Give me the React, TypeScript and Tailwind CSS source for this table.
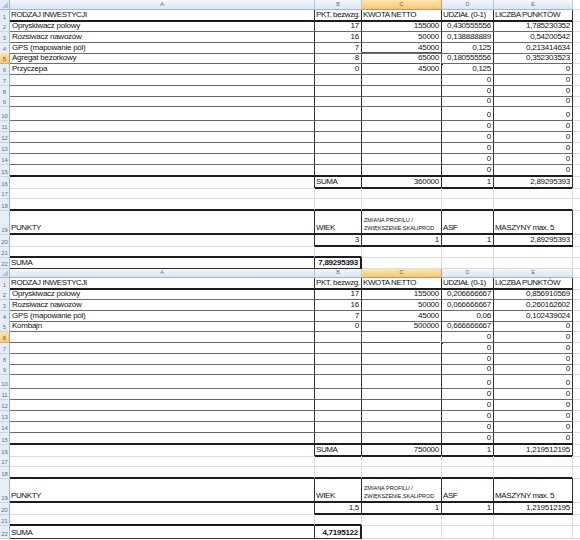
import clsx from 'clsx';

type Bd = 'n' | 'g' | 'm' | 'd' | 'D';
type Cell = { t?: string; r?: boolean; bold?: boolean; small?: boolean; br?: Bd; bb?: Bd; sel?: boolean };
type Row = { h: number; cells: Cell[] };

interface SheetData {
  table: string[][];
  kwota: string;
  suma: string;
  wiek: string;
  total: string;
  sel: number;
}

const COLS = 'grid grid-cols-[10px_305px_47px_80px_52px_79px_7px]';

const H: Record<number, string> = {
  9: 'h-[9px]',
  10: 'h-[10px]',
  11: 'h-[11px]',
  12: 'h-[12px]',
  13: 'h-[13px]',
  14: 'h-[14px]',
  24: 'h-[24px]',
};

const RIGHT: Record<Bd, string> = {
  n: '',
  g: 'border-r border-r-[#dadcdd]',
  m: 'border-r border-r-[#6e6e6e]',
  d: 'border-r border-r-[#2f2f2f]',
  D: 'border-r-2 border-r-[#1c1c1c]',
};

const BOTTOM: Record<Bd, string> = {
  n: '',
  g: 'border-b border-b-[#dadcdd]',
  m: 'border-b border-b-[#6a6a6a]',
  d: 'border-b border-b-[#2f2f2f]',
  D: 'border-b-2 border-b-[#1c1c1c]',
};

const TIGHT = new Set([
  'RODZAJ INWESTYCJI', 'PKT. bezwzg.', 'KWOTA NETTO', 'UDZIAŁ (0-1)', 'LICZBA PUNKTÓW',
  'SUMA', 'PUNKTY', 'WIEK', 'ASF', 'MASZYNY max. 5',
]);

const HEAD = ['RODZAJ INWESTYCJI', 'PKT. bezwzg.', 'KWOTA NETTO', 'UDZIAŁ (0-1)', 'LICZBA PUNKTÓW'];
const EMPTY = ['', '', '', '0', '0'];

const sheets: { d: SheetData; headH: number; lastH: number }[] = [
  {
    headH: 10,
    lastH: 11,
    d: {
      table: [
        HEAD,
        ['Opryskiwacz polowy', '17', '155000', '0,430555556', '1,785230352'],
        ['Rozsiwacz nawozów', '16', '50000', '0,138888889', '0,54200542'],
        ['GPS (mapowanie pól)', '7', '45000', '0,125', '0,213414634'],
        ['Agregat bezorkowy', '8', '65000', '0,180555556', '0,352303523'],
        ['Przyczepa', '0', '45000', '0,125', '0'],
        EMPTY, EMPTY, EMPTY, EMPTY, EMPTY, EMPTY, EMPTY, EMPTY, EMPTY,
      ],
      kwota: '360000',
      suma: '2,89295393',
      wiek: '3',
      total: '7,89295393',
      sel: 5,
    },
  },
  {
    headH: 9,
    lastH: 13,
    d: {
      table: [
        HEAD,
        ['Opryskiwacz polowy', '17', '155000', '0,206666667', '0,856910569'],
        ['Rozsiwacz nawozów', '16', '50000', '0,066666667', '0,260162602'],
        ['GPS (mapowanie pól)', '7', '45000', '0,06', '0,102439024'],
        ['Kombajn', '0', '500000', '0,666666667', '0'],
        EMPTY, EMPTY, EMPTY, EMPTY, EMPTY, EMPTY, EMPTY, EMPTY, EMPTY, EMPTY,
      ],
      kwota: '750000',
      suma: '1,219512195',
      wiek: '1,5',
      total: '4,7195122',
      sel: 6,
    },
  },
];

function buildRows(d: SheetData, lastH: number): Row[] {
  const heights = [11, 11, 11, 10, 11, 11, 11, 10, 11, 14, 11, 11, 11, 11, 12];
  const rows: Row[] = d.table.map((r, i) => ({
    h: heights[i],
    cells: r.map((t, j) => ({
      t,
      r: i > 0 && j > 0,
      br: 'd' as Bd,
      bb: (i === 0 || i === 14 ? 'D' : 'm') as Bd,
      sel: i + 1 === d.sel && j === 2,
    })),
  }));
  rows.push({ h: 11, cells: [
    { br: 'd' },
    { t: 'SUMA', br: 'd', bb: 'D' },
    { t: d.kwota, r: true, br: 'd', bb: 'D' },
    { t: '1', r: true, br: 'd', bb: 'D' },
    { t: d.suma, r: true, br: 'd', bb: 'D' },
  ] });
  rows.push({ h: 11, cells: [{}, {}, {}, {}, {}] });
  rows.push({ h: 12, cells: [{ bb: 'D' }, { bb: 'D' }, { bb: 'D' }, { bb: 'D' }, { bb: 'D' }] });
  rows.push({ h: 24, cells: [
    { t: 'PUNKTY', br: 'd', bb: 'D' },
    { t: 'WIEK', br: 'd', bb: 'D' },
    { t: 'ZMIANA PROFILU /\nZWIĘKSZENIE SKALIPROD', small: true, br: 'd', bb: 'D' },
    { t: 'ASF', br: 'd', bb: 'D' },
    { t: 'MASZYNY max. 5', br: 'd', bb: 'D' },
  ] });
  rows.push({ h: 12, cells: [
    { br: 'd' },
    { t: d.wiek, r: true, br: 'd', bb: 'D' },
    { t: '1', r: true, br: 'd', bb: 'D' },
    { t: '1', r: true, br: 'd', bb: 'D' },
    { t: d.suma, r: true, br: 'd', bb: 'D' },
  ] });
  rows.push({ h: 11, cells: [{ bb: 'D' }, { bb: 'D' }, {}, {}, {}] });
  rows.push({ h: lastH, cells: [
    { t: 'SUMA', br: 'd', bb: 'd' },
    { t: d.total, r: true, bold: true, br: 'D', bb: 'd' },
    {}, {}, {},
  ] });
  return rows;
}

function XCell({ c }: { c: Cell }) {
  const tight = !!c.t && TIGHT.has(c.t);
  return (
    <div
      className={clsx(
        'relative flex items-end pb-px whitespace-nowrap text-[#111]',
        tight ? 'px-px' : 'px-[2px]',
        c.r ? 'justify-end' : 'justify-start',
        c.small
          ? 'text-[5.5px] leading-[8px] whitespace-pre-line pb-[3px]'
          : 'text-[8px] leading-[9px]',
        c.small ? '' : tight ? 'tracking-[-0.4px]' : 'tracking-[-0.25px]',
        c.bold && 'font-bold',
        RIGHT[c.br ?? 'g'],
        BOTTOM[c.bb ?? 'g'],
      )}
    >
      {c.t}
      {c.sel && (
        <div className="pointer-events-none absolute -top-px -left-px -right-px -bottom-px border border-[#555]">
          <div className="absolute -right-[3px] -bottom-[3px] h-[4px] w-[4px] border border-white bg-[#303030]" />
        </div>
      )}
    </div>
  );
}

function Sheet({ d, headH, lastH }: { d: SheetData; headH: number; lastH: number }) {
  const rows = buildRows(d, lastH);
  const letters = ['A', 'B', 'C', 'D', 'E'];
  return (
    <div>
      <div className={clsx(COLS, H[headH])}>
        <div className="relative border-r border-b border-r-[#9eb6ce] border-b-[#9eb6ce] bg-[#e3eaf4]">
          <svg className="absolute right-px bottom-px" width="6" height="6" viewBox="0 0 6 6">
            <polygon points="6,0 6,6 0,6" fill="#b4c4d8" />
          </svg>
        </div>
        {letters.map((l) => (
          <div
            key={l}
            className={clsx(
              'flex items-center justify-center border-r border-b text-[5.5px] leading-none',
              l === 'C'
                ? 'bg-linear-to-b from-[#fce6b4] to-[#f6c572] border-r-[#c9a35a] border-b-[#c49a4f] text-[#7a5a1e]'
                : 'bg-linear-to-b from-[#f4f7fb] to-[#dce5f1] border-r-[#b9c9da] border-b-[#9eb6ce] text-[#5d6f8c]',
            )}
          >
            {l}
          </div>
        ))}
        <div className="border-b border-b-[#dadcdd] bg-white" />
      </div>
      {rows.map((row, i) => (
        <div key={i} className={clsx(COLS, H[row.h])}>
          <div
            className={clsx(
              'flex items-end justify-center pb-px text-[6px] leading-none border-r border-b',
              i + 1 === d.sel
                ? 'bg-linear-to-b from-[#fce3ad] to-[#f7c979] border-r-[#c49a4f] border-b-[#d4b06a] text-[#6d5020]'
                : 'bg-[#e6edf7] border-r-[#9eb6ce] border-b-[#c6d4e4] text-[#5a6f8f]',
            )}
          >
            {i + 1}
          </div>
          {row.cells.map((c, j) => (
            <XCell key={j} c={c} />
          ))}
          <div className="border-b border-b-[#dadcdd]" />
        </div>
      ))}
    </div>
  );
}

export default function App() {
  return (
    <div className="w-[580px] h-[540px] overflow-hidden bg-white font-['Liberation_Sans',Arial,sans-serif]">
      {sheets.map((s, i) => (
        <Sheet key={i} d={s.d} headH={s.headH} lastH={s.lastH} />
      ))}
    </div>
  );
}
